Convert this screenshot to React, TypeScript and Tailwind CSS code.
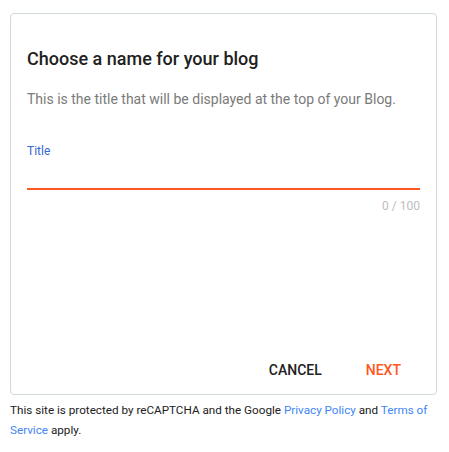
import React from "react";

export default function App() {
  return (
    <div className="w-[449px] h-[452px] bg-white" style={{ fontFamily: "Roboto, 'Noto Sans', sans-serif" }}>
      <div className="pt-[13px] pl-[10px] pr-[12px]">
        <div className="h-[382px] border border-[#cfd8dc] rounded-[4px] flex flex-col px-[16px]">
          <h1 className="mt-[33px] text-[18px] leading-[24px] font-medium text-[#212121]">Choose a name for your blog</h1>
          <p className="mt-[18px] text-[14px] leading-[20px] text-[#7a7a7a]">
            This is the title that will be displayed at the top of your Blog.
          </p>
          <div className="mt-[34px] text-[12px] leading-[16px] text-[#3367d6]">Title</div>
          <div className="mt-[29px] h-[2px] bg-[#ff5722] w-[393px]" />
          <div className="mt-[8px] w-[393px] text-right text-[12px] leading-[16px] text-[#bdbdbd]">0 / 100</div>
          <div className="mt-auto mb-[8px] flex justify-end pr-[3px]">
            <button className="text-[14px] leading-[20px] font-medium text-[#212121] px-[16px] py-[6px]">CANCEL</button>
            <button className="text-[14px] leading-[20px] font-medium text-[#ff5722] px-[16px] py-[6px] ml-[12px]">NEXT</button>
          </div>
        </div>
        <p className="mt-[5px] text-[11.7px] leading-[20px] text-[#212121]">
          This site is protected by reCAPTCHA and the Google{" "}
          <span className="text-[#4285f4]">Privacy Policy</span> and{" "}
          <span className="text-[#4285f4]">Terms of Service</span> apply.
        </p>
      </div>
    </div>
  );
}
